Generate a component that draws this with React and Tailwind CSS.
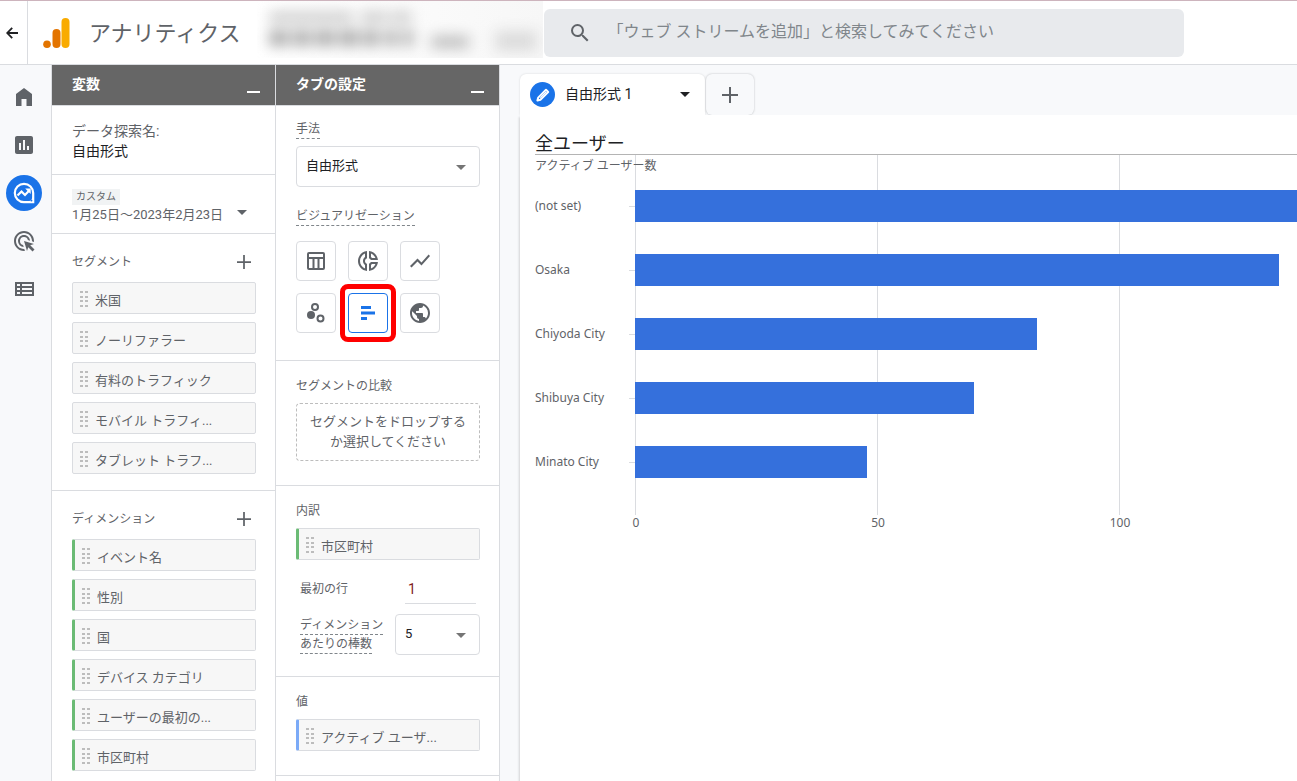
import React from 'react';
import { MdAdsClick, MdInsertChart, MdOutlineDonutSmall, MdPublic, MdSearch, MdShowChart } from 'react-icons/md';

const segments = ['米国', 'ノーリファラー', '有料のトラフィック', 'モバイル トラフィ...', 'タブレット トラフ...'];
const dimensions = ['イベント名', '性別', '国', 'デバイス カテゴリ', 'ユーザーの最初の...', '市区町村'];
const cities = [
  { name: '(not set)', value: 150 },
  { name: 'Osaka', value: 133 },
  { name: 'Chiyoda City', value: 83 },
  { name: 'Shibuya City', value: 70 },
  { name: 'Minato City', value: 48 },
];

const chipEdges = {
  none: 'border-l border-l-[#dadce0]',
  green: 'border-l-3 border-l-[#6bbb75]',
  blue: 'border-l-3 border-l-[#7baaf7]',
};

function Caret({ className = '' }) {
  return (
    <svg viewBox="0 0 10 5" className={`h-[5px] w-[10px] shrink-0 ${className}`} aria-hidden="true">
      <path d="M0 0h10L5 5z" fill="currentColor" />
    </svg>
  );
}

function Plus({ className = '' }) {
  return (
    <svg viewBox="0 0 16 16" className={className} aria-hidden="true">
      <path d="M7 0h2v7h7v2H9v7H7V9H0V7h7z" fill="currentColor" />
    </svg>
  );
}

function Chip({ label, edge = 'none' }) {
  return (
    <button
      type="button"
      className={`flex h-8 w-full cursor-grab items-center gap-[7px] rounded-xs border-y border-r border-[#dadce0] bg-[#f7f7f7] pt-[2px] pl-[7px] text-left ${chipEdges[edge]}`}
    >
      <svg viewBox="0 0 8 16" className="h-4 w-2 shrink-0" fill="#bdbdbd" aria-hidden="true">
        {[0, 5, 9, 14].map((y) => (
          <React.Fragment key={y}>
            <rect x="0" y={y} width="3" height="2" />
            <rect x="5" y={y} width="3" height="2" />
          </React.Fragment>
        ))}
      </svg>
      <span className="truncate pt-1 text-[13px] leading-5">{label}</span>
    </button>
  );
}

function PanelHeader({ title }) {
  return (
    <div className="flex h-[41px] items-center justify-between border-b border-[#dadce0] bg-[#666] pr-[15px] pl-5 text-white">
      <h2 className="pb-[2px] text-sm font-bold">{title}</h2>
      <button type="button" aria-label={`${title}を最小化`} className="flex h-4 items-end">
        <span className="block h-[2px] w-[13px] bg-white" />
      </button>
    </div>
  );
}

function ChipSection({ title, items, edge }) {
  return (
    <section className="border-b border-[#dadce0] pr-[19px] pb-4 pl-5">
      <div className="flex h-12 items-center justify-between pt-2 pr-[5px]">
        <h3 className="text-xs">{title}</h3>
        <button type="button" aria-label={`${title}を追加`}>
          <Plus className="size-[14px]" />
        </button>
      </div>
      <div className="flex flex-col gap-2">
        {items.map((item) => (
          <Chip key={item} label={item} edge={edge} />
        ))}
      </div>
    </section>
  );
}

function Select({ id, value, className }) {
  return (
    <div className={`relative ${className}`}>
      <select id={id} defaultValue={value} className="h-[41px] w-full appearance-none rounded border border-[#dadce0] bg-white pr-7 pb-[2px] pl-[9px] text-[13px] text-[#202124]">
        <option>{value}</option>
      </select>
      <Caret className="pointer-events-none absolute top-[19px] right-[14px] text-[#757575]" />
    </div>
  );
}

function TableIcon() {
  return (
    <svg viewBox="0 0 20 20" className="size-5" fill="none" stroke="currentColor" strokeWidth="2" aria-hidden="true">
      <rect x="2" y="2" width="16" height="16" rx="1" />
      <path d="M2 7h16M7.5 7v11M12.5 7v11" />
    </svg>
  );
}

function ScatterIcon() {
  return (
    <svg viewBox="0 0 20 20" className="size-5" fill="none" stroke="currentColor" strokeWidth="2" aria-hidden="true">
      <circle cx="9" cy="4" r="3" />
      <circle cx="5" cy="12" r="4" fill="currentColor" stroke="none" />
      <circle cx="14.5" cy="15.5" r="3" />
    </svg>
  );
}

function BarsIcon() {
  return (
    <svg viewBox="0 0 20 20" className="size-5" fill="currentColor" aria-hidden="true">
      <path d="M3 3h10v3H3zM3 8.5h14v3H3zM3 14h6v3H3z" />
    </svg>
  );
}

const visualizations = [
  { name: 'テーブル', icon: <TableIcon /> },
  { name: 'ドーナツ グラフ', icon: <MdOutlineDonutSmall className="size-6" /> },
  { name: '折れ線グラフ', icon: <MdShowChart className="size-6" /> },
  { name: '散布図', icon: <ScatterIcon /> },
  { name: '棒グラフ', icon: <BarsIcon />, selected: true },
  { name: '地図', icon: <MdPublic className="size-6" /> },
];

function Header() {
  return (
    <header className="flex h-[65px] shrink-0 items-stretch border-t border-b border-t-[#cdb4bd] border-b-[#dadce0] bg-white">
      <button type="button" aria-label="戻る" className="flex w-7 shrink-0 items-center justify-center border-r border-[#dadce0] pr-1 text-[#202124]">
        <svg viewBox="0 0 12 12" className="size-3" fill="none" stroke="currentColor" strokeWidth="1.8" aria-hidden="true">
          <path d="M12 6H1.4M6.2.8L1.2 6l5 5.2" />
        </svg>
      </button>
      <a href="#home" className="flex shrink-0 items-center pl-[15px]">
        <svg viewBox="0 0 27 30" className="h-[30px] w-[27px]" aria-hidden="true">
          <rect x="18.5" y="0" width="8" height="30" rx="4" fill="#f9ab00" />
          <rect x="9.5" y="11" width="8" height="19" rx="4" fill="#e37400" />
          <circle cx="4" cy="26.2" r="3.8" fill="#e37400" />
        </svg>
        <span className="pt-px pl-[19px] text-[22px] text-[#5f6368]">アナリティクス</span>
      </a>
      <div className="ml-4 h-[57px] w-[286px] shrink-0 overflow-hidden bg-linear-to-r from-white to-[#f7f7f7]">
        <svg className="size-full blur-[7px]" viewBox="0 0 286 57" aria-hidden="true">
          <path d="M12 16h84M104 16h26M134 16h20" stroke="#c4c4c4" strokeWidth="9" />
          <path d="M12 37h20M36 37h18M58 37h20M82 37h20M106 37h16M128 37h12M146 37h10" stroke="#adadad" strokeWidth="16" />
          <path d="M174 41h38" stroke="#bdbdbd" strokeWidth="12" />
          <path d="M238 40h42" stroke="#dcdcdc" strokeWidth="20" />
        </svg>
      </div>
      <label className="mt-2 ml-px flex h-12 w-[640px] min-w-0 items-center rounded-md bg-[#e8eaed] pl-6 text-[#5f6368]">
        <MdSearch className="size-6 shrink-0" />
        <input
          type="search"
          aria-label="検索"
          placeholder="「ウェブ ストリームを追加」と検索してみてください"
          className="min-w-0 flex-1 bg-transparent pb-[2px] pl-4 text-base outline-none placeholder:text-[#80868b]"
        />
      </label>
    </header>
  );
}

function Sidebar() {
  return (
    <nav aria-label="メイン" className="flex w-[52px] shrink-0 flex-col items-center gap-3 border-r border-[#dadce0] pt-[14px] pr-[3px] text-[#5f6368]">
      <a href="#home" aria-label="ホーム" className="flex size-9 items-center justify-center">
        <svg viewBox="0 0 24 24" className="size-6" fill="currentColor" aria-hidden="true">
          <path d="M4 21V9l8-6 8 6v12h-5.5v-7h-5v7z" />
        </svg>
      </a>
      <a href="#reports" aria-label="レポート" className="flex size-9 items-center justify-center">
        <MdInsertChart className="size-6" />
      </a>
      <a href="#explore" aria-label="探索" className="flex size-9 items-center justify-center rounded-full bg-[#1a73e8] text-white">
        <svg viewBox="0 0 22 22" className="size-[22px]" fill="none" stroke="currentColor" strokeWidth="2.2" aria-hidden="true">
          <path d="M11 1.8a9.2 9.2 0 1 0 0 18.4h9.2V11A9.2 9.2 0 0 0 11 1.8z" />
          <path d="M4.5 13.5l4-4 3.5 3.5 4.5-4.7" />
          <path d="M12.2 6.6h5.5v5.5z" fill="currentColor" stroke="none" />
          <path d="M15 20h5v-5a9 9 0 0 1-5 5z" fill="currentColor" stroke="none" />
          <circle cx="18.4" cy="18.5" r="1" fill="#1a73e8" stroke="none" />
        </svg>
      </a>
      <a href="#ads" aria-label="広告" className="flex size-9 items-center justify-center">
        <MdAdsClick className="size-6" />
      </a>
      <a href="#configure" aria-label="設定" className="flex size-9 items-center justify-center">
        <svg viewBox="0 0 19 14" className="h-[14px] w-[19px]" fill="none" stroke="currentColor" strokeWidth="2" aria-hidden="true">
          <path d="M1 1h17v12H1zM1 5h17M1 9h17M6 1v12" />
        </svg>
      </a>
    </nav>
  );
}

function VariablesPanel() {
  return (
    <aside className="w-56 shrink-0 border-r border-[#dadce0] bg-white">
      <PanelHeader title="変数" />
      <div className="h-[69px] border-b border-[#dadce0] px-5 pt-[15px] text-sm leading-5">
        <p>データ探索名:</p>
        <p className="text-[#202124]">自由形式</p>
      </div>
      <button type="button" className="flex h-[59px] w-full items-end justify-between border-b border-[#dadce0] pr-7 pb-2 pl-5 text-left">
        <span className="flex flex-col items-start">
          <span className="bg-[#f1f3f4] px-1 text-[10px] leading-4">カスタム</span>
          <span className="text-[13px] leading-5">1月25日～2023年2月23日</span>
        </span>
        <Caret className="mb-[10px]" />
      </button>
      <ChipSection title="セグメント" items={segments} edge="none" />
      <ChipSection title="ディメンション" items={dimensions} edge="green" />
    </aside>
  );
}

function SettingsPanel() {
  return (
    <aside className="w-56 shrink-0 border-r border-[#dadce0] bg-white">
      <PanelHeader title="タブの設定" />
      <section className="h-[255px] border-b border-[#dadce0] pt-[14px] pr-[19px] pl-5">
        <label htmlFor="technique" className="block w-fit border-b border-dashed border-[#80868b] text-xs leading-[18px]">手法</label>
        <Select id="technique" value="自由形式" className="mt-[7px]" />
        <h3 className="mt-5 w-fit border-b border-dashed border-[#80868b] text-xs leading-[18px]">ビジュアリゼーション</h3>
        <div className="mt-[15px] grid w-fit grid-cols-3 gap-3">
          {visualizations.map(({ name, icon, selected }) => (
            <button
              key={name}
              type="button"
              aria-label={name}
              aria-pressed={!!selected}
              className={`relative flex size-10 items-center justify-center rounded border ${selected ? 'border-[#1a73e8] text-[#1a73e8]' : 'border-[#dadce0]'}`}
            >
              {icon}
              {selected && <span className="absolute -inset-x-[9px] -inset-y-[10px] rounded-lg border-5 border-[#ff0000]" />}
            </button>
          ))}
        </div>
      </section>
      <section className="h-[125px] border-b border-[#dadce0] pt-4 pr-[19px] pl-5">
        <h3 className="text-xs leading-[18px]">セグメントの比較</h3>
        <button type="button" className="mt-2 block h-[58px] w-full rounded border border-dashed border-[#bdbdbd] px-3 pb-px text-[13px] leading-5">
          セグメントをドロップするか選択してください
        </button>
      </section>
      <section className="h-[191px] border-b border-[#dadce0] pt-4 pr-[19px] pl-5">
        <h3 className="text-xs leading-[18px]">内訳</h3>
        <div className="mt-2">
          <Chip label="市区町村" edge="green" />
        </div>
        <div className="mt-[14px] flex items-center justify-between pr-1 pl-1">
          <label htmlFor="first-row" className="text-xs leading-[18px]">最初の行</label>
          <input id="first-row" type="text" defaultValue="1" className="h-[30px] w-[71px] border-b border-[#dadce0] bg-transparent px-[3px] text-sm text-[#7f1d1d] outline-none" />
        </div>
        <div className="mt-[10px] flex items-center justify-between pl-1">
          <label htmlFor="bars" className="text-xs leading-[18px]">
            <span className="block w-fit border-b border-dashed border-[#80868b]">ディメンション</span>
            <span className="block w-fit border-b border-dashed border-[#80868b]">あたりの棒数</span>
          </label>
          <Select id="bars" value="5" className="w-[85px]" />
        </div>
      </section>
      <section className="h-[99px] border-b border-[#dadce0] pt-4 pr-[19px] pl-5">
        <h3 className="text-xs leading-[18px]">値</h3>
        <div className="mt-2">
          <Chip label="アクティブ ユーザ..." edge="blue" />
        </div>
      </section>
    </aside>
  );
}

const unit = 4.84;
const originX = 100;

function BarChart() {
  return (
    <svg className="block h-[380px] w-full text-xs" role="img" aria-label="アクティブ ユーザー数">
      {[0, 50, 100].map((tick) => (
        <g key={tick}>
          <rect x={Math.round(originX + tick * unit)} y="0" width="1" height="360" fill="#dadce0" />
          <text x={Math.round(originX + tick * unit) + 1} y="372" textAnchor="middle" fill="#5f6368" className="font-['Noto_Sans']">{tick}</text>
        </g>
      ))}
      <text x="0" y="15" fill="#5f6368">アクティブ ユーザー数</text>
      {cities.map(({ name, value }, i) => (
        <g key={name}>
          <text x="0" y={55 + i * 64} fill="#5f6368" className="font-['Noto_Sans']">{name}</text>
          <rect x={originX - 6} y={51 + i * 64} width="6" height="1" fill="#dadce0" />
          <rect x={originX} y={35 + i * 64} width={Math.round(value * unit)} height="32" fill="#3570dc" />
        </g>
      ))}
    </svg>
  );
}

function Report() {
  return (
    <main className="flex min-w-0 flex-1 flex-col pt-[9px] pl-5">
      <div className="flex h-[41px] shrink-0 gap-px">
        <div className="flex w-[185px] items-center rounded-t-md bg-white pr-[15px] pl-[10px] text-[#202124] shadow-[0_0_2px_rgba(60,64,67,0.2)]">
          <span className="flex size-[25px] items-center justify-center rounded-full bg-[#1a73e8]">
            <svg viewBox="0 0 16 16" className="size-4" fill="none" stroke="#fff" aria-hidden="true">
              <path d="M2.4 13.6l.8-3L11 2.8l2.2 2.2-7.8 7.8z" strokeWidth="2" strokeLinejoin="round" />
              <path d="M5.2 10.8l5.8-5.8" strokeWidth="1" />
            </svg>
          </span>
          <button type="button" className="flex flex-1 items-center justify-between pb-px pl-[10px] text-sm">
            自由形式 1
            <Caret />
          </button>
        </div>
        <button type="button" aria-label="タブを追加" className="flex w-12 items-center justify-center rounded-md text-[#5f6368] shadow-[0_0_2px_rgba(60,64,67,0.35)]">
          <Plus className="size-4" />
        </button>
      </div>
      <div className="relative flex-1 bg-white pt-4 pl-[15px] shadow-[-1px_2px_2px_rgba(60,64,67,0.2)]">
        <h1 className="h-6 border-b border-[#b4b4b4] text-lg leading-[26px] text-[#202124]">全ユーザー</h1>
        <BarChart />
      </div>
    </main>
  );
}

export default function App() {
  return (
    <div className="flex h-screen flex-col overflow-hidden bg-[#f8f9fb] font-[Roboto,'Noto_Sans_CJK_JP',sans-serif] text-[#5f6368]">
      <Header />
      <div className="flex min-h-0 flex-1">
        <Sidebar />
        <VariablesPanel />
        <SettingsPanel />
        <Report />
      </div>
    </div>
  );
}
